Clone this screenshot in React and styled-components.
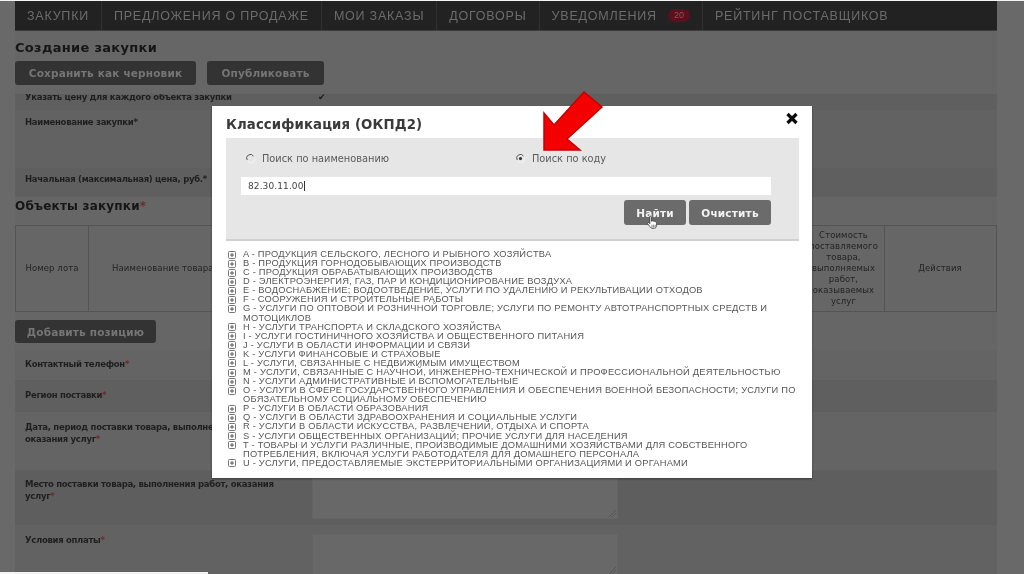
import React from "react";
import styled, { createGlobalStyle } from "styled-components";

const Global = createGlobalStyle`
  html, body { margin: 0; padding: 0; background: #6a6a6a; overflow: hidden; }
  * { box-sizing: border-box; }
`;

const Stage = styled.div`
  position: relative;
  width: 1024px;
  height: 574px;
  overflow: hidden;
  background: #696969;
  font-family: "Liberation Sans", Arial, sans-serif;
  filter: blur(0.5px);
`;
const TopEdge = styled.div`height: 1px; background: #f4f4f4;`;
const Page = styled.div`
  display: flex;
  flex-direction: column;
  width: 982px;
  margin-left: 15px;
  background: #666;
`;
const Nav = styled.nav`
  display: flex;
  align-items: center;
  height: 29px;
  padding-left: 12px;
  background: #222;
  box-shadow: 0 1px 0 #3c3c3c;
`;
const NavItem = styled.span`
  display: flex;
  align-items: center;
  height: 100%;
  padding-right: 12px;
  margin-right: 12px;
  color: #6c6c6c;
  font-size: 12.5px;
  letter-spacing: 0.78px;
  white-space: nowrap;
  border-right: 1px solid ${(p) => (p.$last ? "transparent" : "#303030")};
`;
const Badge = styled.span`
  margin-left: 11px;
  padding: 0 6px;
  height: 13px;
  line-height: 13px;
  letter-spacing: 0;
  border-radius: 7px;
  background: #5c0f1c;
  color: #8a5a60;
  font-size: 9px;
`;
const Title = styled.h1`
  margin: 10px 0 0;
  height: 15px;
  font: bold 13px/15px "DejaVu Sans", sans-serif;
  letter-spacing: 0.3px;
  color: #161616;
`;
const Actions = styled.div`
  display: flex;
  gap: 11px;
  margin-top: 6px;
`;
const DarkButton = styled.div`
  display: flex;
  align-items: center;
  justify-content: center;
  width: ${(p) => p.$w}px;
  height: ${(p) => p.$h ?? 24}px;
  border-radius: 3px;
  background: #333;
  color: #757575;
  font: bold 10.5px "DejaVu Sans", sans-serif;
  letter-spacing: 0.17px;
`;
const Clip = styled.div`
  height: 103px;
  margin-top: 9px;
  overflow: hidden;
`;
const ClipInner = styled.div`margin-top: -3px;`;
const Row = styled.div`
  display: flex;
  height: ${(p) => p.$h}px;
  padding: ${(p) => p.$pt ?? 7}px 0 0 10px;
  background: ${(p) => p.$bg ?? "#626262"};
`;
const Label = styled.div`
  width: 268px;
  font: bold 8.5px/12px "DejaVu Sans", sans-serif;
  letter-spacing: -0.3px;
  color: #1f1f1f;
`;
const Check = styled.span`
  margin-left: 25px;
  color: #1c1c1c;
  font-size: 9px;
  line-height: 12px;
`;
const Field = styled.div`
  position: relative;
  width: 304px;
  height: ${(p) => p.$h}px;
  margin: ${(p) => p.$mt ?? 0}px 0 0 20px;
  background: #686868;
  box-shadow: 0 0 0 1px #646464;
`;
const Grip = styled.svg`
  position: absolute;
  right: 1px;
  bottom: 1px;
`;
const Section = styled.h2`
  margin: 0;
  padding-top: 2px;
  height: 28px;
  font: bold 12px/14px "DejaVu Sans", sans-serif;
  letter-spacing: 0.2px;
  color: #161616;
`;
const Star = styled.span`color: #6e2a2a;`;
const Table = styled.div`
  display: grid;
  grid-template-columns: 73px 714px 82px 111px;
  height: 87px;
  border: 1px solid #545454;
`;
const Th = styled.div`
  display: flex;
  align-items: center;
  justify-content: center;
  padding: 0 2px;
  border-right: 1px solid ${(p) => (p.$last ? "transparent" : "#545454")};
  text-align: center;
  font: 8.5px/11px "DejaVu Sans", sans-serif;
  letter-spacing: 0.1px;
  color: #232323;
`;
const ThName = styled(Th)`justify-content: flex-start; padding-left: 23px;`;
const AddWrap = styled.div`margin: 8px 0 7px;`;

const Overlay = styled.section`
  position: absolute;
  left: 212px;
  top: 106px;
  width: 600px;
  height: 372px;
  padding: 0 13px 0 14px;
  background: #fff;
  box-shadow: 0 1px 2px rgba(0,0,0,.4);
`;
const ModalTitle = styled.h3`
  margin: 0;
  height: 32px;
  padding-top: 10px;
  font: bold 13.3px/18px "DejaVu Sans", sans-serif;
  letter-spacing: 0.1px;
  color: #3a3a3a;
`;
const Close = styled.svg`
  position: absolute;
  right: 13px;
  top: 6px;
`;
const Search = styled.div`
  display: flex;
  flex-direction: column;
  height: 103px;
  padding: 13px 28px 0 15px;
  background: #e6e6e6;
  border-bottom: 2px solid #d0d0d0;
`;
const Radios = styled.div`
  display: flex;
  height: 14px;
  padding-left: 5px;
`;
const RadioItem = styled.label`
  display: flex;
  flex: none;
  align-items: center;
  gap: 7px;
  width: 270px;
  font: 9.8px "DejaVu Sans", sans-serif;
  color: #5b5b5b;
`;
const Input = styled.div`
  height: 18px;
  margin-top: 12px;
  padding-left: 7px;
  background: #fff;
  font: 9px/18px "DejaVu Sans", sans-serif;
  letter-spacing: 0.1px;
  color: #444;
`;
const Caret = styled.span`border-right: 1px solid #333;`;
const Buttons = styled.div`
  display: flex;
  justify-content: flex-end;
  gap: 3px;
  margin-top: 5px;
`;
const GreyButton = styled.div`
  position: relative;
  display: flex;
  align-items: center;
  justify-content: center;
  width: ${(p) => p.$w}px;
  height: 25px;
  border-radius: 3px;
  background: #6b6b6b;
  color: #f2f2f2;
  font: bold 10.5px "DejaVu Sans", sans-serif;
  letter-spacing: 0.2px;
`;
const Cursor = styled.svg`
  position: absolute;
  left: 22px;
  top: 15px;
`;
const Tree = styled.ul`
  list-style: none;
  margin: 0 -4px 0 0;
  padding: 9px 0 0 2px;
`;
const TreeRow = styled.li`
  display: flex;
  gap: 7px;
  font-size: 9.3px;
  line-height: 9.08px;
  letter-spacing: 0.22px;
  color: #565656;
`;
const TreeText = styled.span`flex: 1;`;
const Plus = styled.svg`flex: none; margin-top: 0.5px;`;
const Arrow = styled.svg`
  position: absolute;
  left: 540px;
  top: 90px;
`;
const BottomEdge = styled.div`
  position: absolute;
  left: 0;
  bottom: 0;
  width: 208px;
  height: 2px;
  background: #f4f4f4;
`;

const navItems = ["ЗАКУПКИ", "ПРЕДЛОЖЕНИЯ О ПРОДАЖЕ", "МОИ ЗАКАЗЫ", "ДОГОВОРЫ"];
const tree = [
  "A - ПРОДУКЦИЯ СЕЛЬСКОГО, ЛЕСНОГО И РЫБНОГО ХОЗЯЙСТВА",
  "B - ПРОДУКЦИЯ ГОРНОДОБЫВАЮЩИХ ПРОИЗВОДСТВ",
  "C - ПРОДУКЦИЯ ОБРАБАТЫВАЮЩИХ ПРОИЗВОДСТВ",
  "D - ЭЛЕКТРОЭНЕРГИЯ, ГАЗ, ПАР И КОНДИЦИОНИРОВАНИЕ ВОЗДУХА",
  "E - ВОДОСНАБЖЕНИЕ; ВОДООТВЕДЕНИЕ, УСЛУГИ ПО УДАЛЕНИЮ И РЕКУЛЬТИВАЦИИ ОТХОДОВ",
  "F - СООРУЖЕНИЯ И СТРОИТЕЛЬНЫЕ РАБОТЫ",
  "G - УСЛУГИ ПО ОПТОВОЙ И РОЗНИЧНОЙ ТОРГОВЛЕ; УСЛУГИ ПО РЕМОНТУ АВТОТРАНСПОРТНЫХ СРЕДСТВ И МОТОЦИКЛОВ",
  "H - УСЛУГИ ТРАНСПОРТА И СКЛАДСКОГО ХОЗЯЙСТВА",
  "I - УСЛУГИ ГОСТИНИЧНОГО ХОЗЯЙСТВА И ОБЩЕСТВЕННОГО ПИТАНИЯ",
  "J - УСЛУГИ В ОБЛАСТИ ИНФОРМАЦИИ И СВЯЗИ",
  "K - УСЛУГИ ФИНАНСОВЫЕ И СТРАХОВЫЕ",
  "L - УСЛУГИ, СВЯЗАННЫЕ С НЕДВИЖИМЫМ ИМУЩЕСТВОМ",
  "M - УСЛУГИ, СВЯЗАННЫЕ С НАУЧНОЙ, ИНЖЕНЕРНО-ТЕХНИЧЕСКОЙ И ПРОФЕССИОНАЛЬНОЙ ДЕЯТЕЛЬНОСТЬЮ",
  "N - УСЛУГИ АДМИНИСТРАТИВНЫЕ И ВСПОМОГАТЕЛЬНЫЕ",
  "O - УСЛУГИ В СФЕРЕ ГОСУДАРСТВЕННОГО УПРАВЛЕНИЯ И ОБЕСПЕЧЕНИЯ ВОЕННОЙ БЕЗОПАСНОСТИ; УСЛУГИ ПО ОБЯЗАТЕЛЬНОМУ СОЦИАЛЬНОМУ ОБЕСПЕЧЕНИЮ",
  "P - УСЛУГИ В ОБЛАСТИ ОБРАЗОВАНИЯ",
  "Q - УСЛУГИ В ОБЛАСТИ ЗДРАВООХРАНЕНИЯ И СОЦИАЛЬНЫЕ УСЛУГИ",
  "R - УСЛУГИ В ОБЛАСТИ ИСКУССТВА, РАЗВЛЕЧЕНИЙ, ОТДЫХА И СПОРТА",
  "S - УСЛУГИ ОБЩЕСТВЕННЫХ ОРГАНИЗАЦИЙ; ПРОЧИЕ УСЛУГИ ДЛЯ НАСЕЛЕНИЯ",
  "T - ТОВАРЫ И УСЛУГИ РАЗЛИЧНЫЕ, ПРОИЗВОДИМЫЕ ДОМАШНИМИ ХОЗЯЙСТВАМИ ДЛЯ СОБСТВЕННОГО ПОТРЕБЛЕНИЯ, ВКЛЮЧАЯ УСЛУГИ РАБОТОДАТЕЛЯ ДЛЯ ДОМАШНЕГО ПЕРСОНАЛА",
  "U - УСЛУГИ, ПРЕДОСТАВЛЯЕМЫЕ ЭКСТЕРРИТОРИАЛЬНЫМИ ОРГАНИЗАЦИЯМИ И ОРГАНАМИ",
];

const PlusBox = () => (
  <Plus width="8" height="8" viewBox="0 0 8 8">
    <rect x="0.5" y="0.5" width="7" height="7" rx="1" fill="none" stroke="#777" />
    <path d="M2 4h4M4 2v4" stroke="#555" />
  </Plus>
);
const GripMark = () => (
  <Grip width="8" height="8" viewBox="0 0 8 8">
    <path d="M1 8L8 1M4 8l4-4" stroke="#555" />
  </Grip>
);
const Radio = ({ on }) => (
  <svg width="9" height="9" viewBox="0 0 9 9">
    <path d="M1.2 6A3.500 3.500 0 0 1 7.500 2.200" fill="none" stroke="#555" strokeWidth="1" />
    <path d="M7.800 3A3.500 3.500 0 0 1 2 7.400" fill="none" stroke="#f6f6f6" strokeWidth="1" />
    {on && <circle cx="4.500" cy="4.500" r="1.600" fill="#333" />}
  </svg>
);

export default function App() {
  return (
    <Stage>
      <Global />
      <TopEdge />
      <Page>
        <Nav>
          {navItems.map((t) => <NavItem key={t}>{t}</NavItem>)}
          <NavItem>УВЕДОМЛЕНИЯ<Badge>20</Badge></NavItem>
          <NavItem $last>РЕЙТИНГ ПОСТАВЩИКОВ</NavItem>
        </Nav>
        <Title>Создание закупки</Title>
        <Actions>
          <DarkButton $w={181}>Сохранить как черновик</DarkButton>
          <DarkButton $w={117}>Опубликовать</DarkButton>
        </Actions>
        <Clip>
          <ClipInner>
            <Row $h={19} $pt={0} $bg="#5f5f5f">
              <Label>Указать цену для каждого объекта закупки</Label>
              <Check>✔</Check>
            </Row>
            <Row $h={58} $pt={6}><Label>Наименование закупки*</Label></Row>
            <Row $h={29} $pt={5} $bg="#5f5f5f"><Label>Начальная (максимальная) цена, руб.*</Label></Row>
          </ClipInner>
        </Clip>
        <Section>Объекты закупки<Star>*</Star></Section>
        <Table>
          <Th>Номер лота</Th>
          <ThName>Наименование товара, работ, услуг</ThName>
          <Th>Стоимость поставляемого товара, выполняемых работ, оказываемых услуг</Th>
          <Th $last>Действия</Th>
        </Table>
        <AddWrap><DarkButton $w={141} $h={23}>Добавить позицию</DarkButton></AddWrap>
        <Row $h={30} $pt={8} $bg="#646464"><Label>Контактный телефон<Star>*</Star></Label></Row>
        <Row $h={32} $pt={9} $bg="#5f5f5f"><Label>Регион поставки<Star>*</Star></Label></Row>
        <Row $h={58} $pt={9} $bg="#646464"><Label>Дата, период поставки товара, выполнения работ, оказания услуг<Star>*</Star></Label></Row>
        <Row $h={55} $pt={8} $bg="#5e5e5e">
          <Label>Место поставки товара, выполнения работ, оказания услуг<Star>*</Star></Label>
          <Field $h={40}><GripMark /></Field>
        </Row>
        <Row $h={50} $pt={9} $bg="#626262">
          <Label>Условия оплаты<Star>*</Star></Label>
          <Field $h={40} $mt={1}><GripMark /></Field>
        </Row>
      </Page>

      <Overlay>
        <ModalTitle>Классификация (ОКПД2)</ModalTitle>
        <Close width="14" height="13" viewBox="0 0 14 13">
          <path d="M2.500 2L11.500 11M11.500 2L2.500 11" stroke="#0c0c0c" strokeWidth="3.2" />
        </Close>
        <Search>
          <Radios>
            <RadioItem><Radio />Поиск по наименованию</RadioItem>
            <RadioItem><Radio on />Поиск по коду</RadioItem>
          </Radios>
          <Input><Caret>82.30.11.00</Caret></Input>
          <Buttons>
            <GreyButton $w={62}>
              Найти
              <Cursor width="13" height="15" viewBox="0 0 14 17">
                <path d="M4 1.500c1-.6 1.800 0 1.800 1V7l1.200-.4 1 .2 1 .3 1.600.6c.8.4 1 1 1 2v2.300c0 1.500-1 3-2.500 3H6.500c-1 0-1.600-.8-2.200-1.600L1.500 10c-.6-1 .4-2 1.500-1.200L4 9.800V2.500c0-.4 0-.8 0-1z" fill="#fff" stroke="#333" strokeWidth="0.9" />
                <path d="M6.500 11v3M8.300 11v3M10 11v3" stroke="#333" strokeWidth="0.7" />
              </Cursor>
            </GreyButton>
            <GreyButton $w={82}>Очистить</GreyButton>
          </Buttons>
        </Search>
        <Tree>
          {tree.map((t) => (
            <TreeRow key={t}><PlusBox /><TreeText>{t}</TreeText></TreeRow>
          ))}
        </Tree>
      </Overlay>

      <Arrow width="70" height="70" viewBox="0 0 70 70">
        <path d="M44 2L62 17 27 49 40 60H4V23L14 35z" fill="#f40000" stroke="#c50000" strokeWidth="1.500" />
      </Arrow>
      <BottomEdge />
    </Stage>
  );
}
